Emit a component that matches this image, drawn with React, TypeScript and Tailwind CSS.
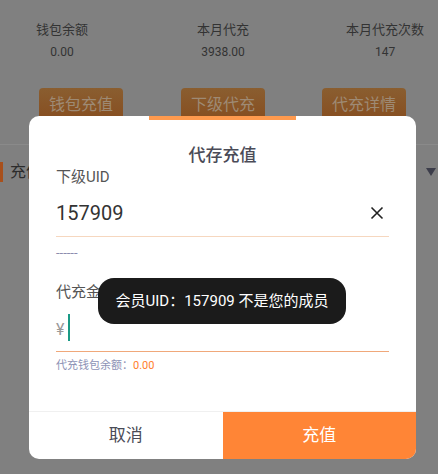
import React from "react";

const font = { fontFamily: 'Roboto, "Noto Sans CJK SC", "Noto Sans", sans-serif' };

function Stat({ label, value, className }: { label: string; value: string; className?: string }) {
  return (
    <div className={"flex flex-col items-center " + (className ?? "")}>
      <div className="text-[13px] leading-[18px] text-[#333333]">{label}</div>
      <div className="mt-[4px] text-[12px] leading-[18px] text-[#333333]">{value}</div>
    </div>
  );
}

function BgButton({ children }: { children: React.ReactNode }) {
  return (
    <div className="flex h-[34px] w-[84px] items-center justify-center rounded-[4px] bg-gradient-to-b from-[#8a5e30] to-[#864d1f] text-[16px] text-[#9e8a74]">
      {children}
    </div>
  );
}

export default function App() {
  return (
    <div style={font} className="relative h-[474px] w-[438px] overflow-hidden bg-[#808080]">
      {/* dimmed background page */}
      <div className="flex flex-col">
        <div className="flex pl-[36px] pt-[21px]">
          <Stat label="钱包余额" value="0.00" />
          <Stat label="本月代充" value="3938.00" className="ml-[109px]" />
          <Stat label="本月代充次数" value="147" className="ml-[97px]" />
        </div>
        <div className="mt-[27px] flex pl-[39px]">
          <BgButton>钱包充值</BgButton>
          <div className="w-[58px]" />
          <BgButton>下级代充</BgButton>
          <div className="w-[57px]" />
          <BgButton>代充详情</BgButton>
        </div>
        <div className="mt-[22px] h-px bg-[#8a8a8a]" />
        <div className="mt-[17px] flex h-[20px] items-center">
          <div className="h-[20px] w-[3px] bg-[#a8501c]" />
          <div className="ml-[7px] text-[16px] text-[#2c2c2c]">充值</div>
          <div className="flex-1" />
          <div className="mr-[2px] h-0 w-0 border-x-[5px] border-t-[8px] border-x-transparent border-t-[#3c3d4a]" />
        </div>
      </div>

      {/* modal */}
      <div className="absolute left-[29px] top-[116px] flex h-[343px] w-[387px] flex-col overflow-hidden rounded-[10px] bg-white">
        <div className="absolute left-[120px] top-0 h-[4px] w-[147px] bg-[#ff9a4e]" />
        <div className="flex flex-col px-[27px] pt-[28px]">
          <div className="text-center text-[17px] font-medium leading-[22px] text-[#4a4b57]">代存充值</div>
          <div className="mt-[1px] text-[15px] leading-[20px] text-[#555555]">下级UID</div>
          <div className="mt-[3px] flex h-[47px] items-center border-b border-[#f6d7bf]">
            <div className="flex-1 text-[20px] text-[#333333]">157909</div>
            <svg width="14" height="14" viewBox="0 0 14 14" className="mr-[5px]">
              <path d="M1.5 1.5L12.5 12.5M12.5 1.5L1.5 12.5" stroke="#222" strokeWidth="1.6" />
            </svg>
          </div>
          <div className="mt-[8px] text-[13px] leading-[16px] text-[#8b8cae]">------</div>
          <div className="mt-[21px] text-[15px] leading-[20px] text-[#555555]">代充金额</div>
          <div className="mt-[2px] flex h-[48px] items-center border-b border-[#f0a87a]">
            <span className="mt-[5px] text-[16px] text-[#999999]">¥</span>
            <div className="ml-[4px] h-[27px] w-[2px] bg-[#1a9a86]" />
          </div>
          <div className="mt-[7px] text-[11px] leading-[14px] text-[#8e93b6]">
            代充钱包余额：<span className="text-[#ff7e2c]">0.00</span>
          </div>
        </div>
        <div className="flex-1" />
        <div className="flex h-[48px] border-t border-[#f0f0f0]">
          <div className="flex flex-1 items-center justify-center text-[17px] text-[#4a4b57]">取消</div>
          <div className="flex flex-1 items-center justify-center bg-[#ff8536] text-[17px] text-white">充值</div>
        </div>
      </div>

      {/* toast */}
      <div className="absolute left-[98px] top-[278px] flex h-[46px] w-[248px] items-center justify-center rounded-[16px] bg-[#1b1b1b] text-[15px] text-white">
        会员UID：157909 不是您的成员
      </div>
    </div>
  );
}
